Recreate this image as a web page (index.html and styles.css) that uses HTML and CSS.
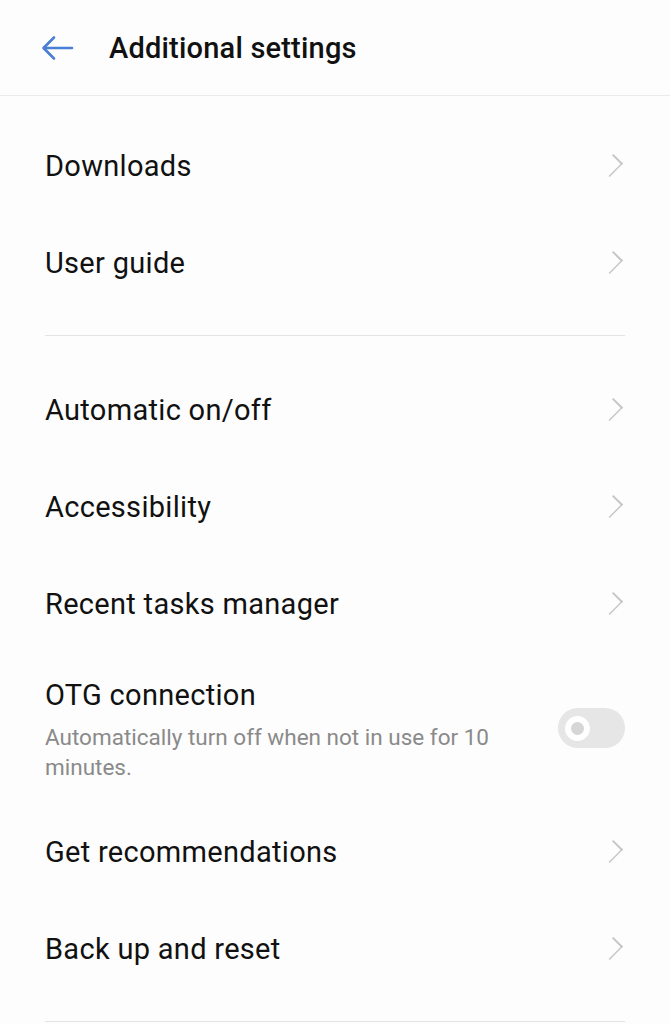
FILE: index.html
```html
<!DOCTYPE html>
<html lang="en">
<head>
  <meta charset="UTF-8">
  <title>Additional settings</title>
  <link rel="stylesheet" href="styles.css">
</head>
<body>
  <div class="header">
    <svg class="back" width="34" height="26" viewBox="0 0 34 26">
      <path d="M31 13H3M13 2.5L2.5 13L13 23.5" fill="none" stroke="#4a7fd8" stroke-width="2.6" stroke-linecap="round" stroke-linejoin="round"/>
    </svg>
    <h1>Additional settings</h1>
  </div>

  <div class="group">
    <div class="row"><span class="label">Downloads</span><span class="chev"></span></div>
    <div class="row"><span class="label">User guide</span><span class="chev"></span></div>
  </div>

  <div class="group">
    <div class="row"><span class="label">Automatic on/off</span><span class="chev"></span></div>
    <div class="row"><span class="label">Accessibility</span><span class="chev"></span></div>
    <div class="row"><span class="label">Recent tasks manager</span><span class="chev"></span></div>
    <div class="row row-sub">
      <div class="texts">
        <div class="label">OTG connection</div>
        <div class="sub">Automatically turn off when not in use for 10 minutes.</div>
      </div>
      <div class="toggle"><span class="knob"></span></div>
    </div>
    <div class="row"><span class="label">Get recommendations</span><span class="chev"></span></div>
    <div class="row"><span class="label">Back up and reset</span><span class="chev"></span></div>
  </div>
</body>
</html>
```

FILE: styles.css
```css
body {
  margin: 0;
  background: #fdfdfd;
  font-family: Roboto, 'Noto Sans', sans-serif;
  color: #111;
}
.header {
  height: 96px;
  display: flex;
  align-items: center;
  border-bottom: 1px solid #ebebeb;
  box-sizing: border-box;
  padding-left: 41px;
}
.back { margin-top: 1px; }
.header h1 {
  margin: 0 0 0 34px;
  font-size: 29px;
  font-weight: 500;
  letter-spacing: 0.2px;
}
.group {
  margin: 0 45px;
  padding: 21px 0 24px;
  border-bottom: 1px solid #e4e4e4;
}
.group + .group { padding-top: 25px; }
.row {
  height: 97px;
  display: flex;
  align-items: center;
  justify-content: space-between;
}
.label {
  font-size: 29px;
  line-height: 30px;
  letter-spacing: 0.3px;
}
.chev {
  width: 17px;
  height: 17px;
  border-top: 2px solid #c6c6c6;
  border-right: 2px solid #c6c6c6;
  transform: rotate(45deg) scaleX(0.72);
  margin-right: 4px;
}
.row-sub {
  height: auto;
  padding: 28px 0 21px;
}
.texts { width: 490px; }
.sub {
  margin-top: 12px;
  font-size: 22.5px;
  line-height: 30px;
  color: #8a8a8a;
}
.toggle {
  width: 67px;
  height: 40px;
  border-radius: 20px;
  background: #e6e6e6;
  display: flex;
  align-items: center;
  padding-left: 7px;
  box-sizing: border-box;
  margin-bottom: 6px;
}
.knob {
  width: 13px;
  height: 13px;
  border-radius: 50%;
  background: #d6d6d6;
  border: 6px solid #fff;
}
```
